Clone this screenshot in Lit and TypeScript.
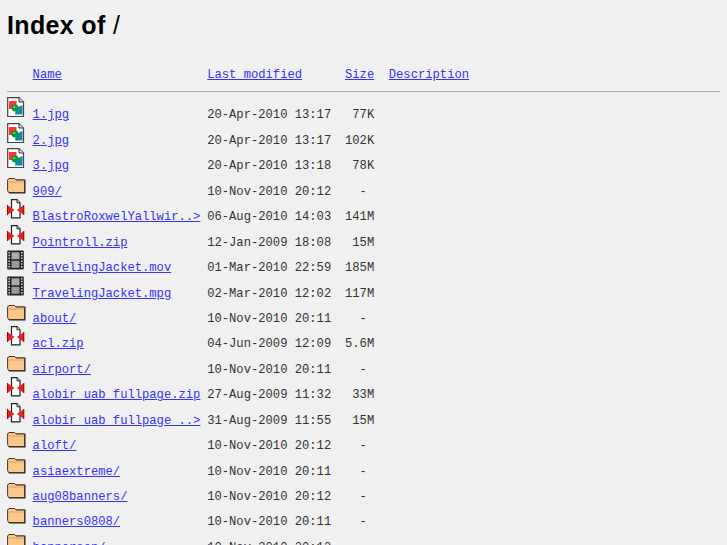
import { LitElement, html, css, svg } from "lit";
import { customElement } from "lit/decorators.js";

type Kind = "img" | "dir" | "zip" | "mov";
const rows: [Kind, string, string, string][] = [
  ["img", "1.jpg", "20-Apr-2010 13:17", "77K"],
  ["img", "2.jpg", "20-Apr-2010 13:17", "102K"],
  ["img", "3.jpg", "20-Apr-2010 13:18", "78K"],
  ["dir", "909/", "10-Nov-2010 20:12", "- "],
  ["zip", "BlastroRoxwelYallwir..>", "06-Aug-2010 14:03", "141M"],
  ["zip", "Pointroll.zip", "12-Jan-2009 18:08", "15M"],
  ["mov", "TravelingJacket.mov", "01-Mar-2010 22:59", "185M"],
  ["mov", "TravelingJacket.mpg", "02-Mar-2010 12:02", "117M"],
  ["dir", "about/", "10-Nov-2010 20:11", "- "],
  ["zip", "acl.zip", "04-Jun-2009 12:09", "5.6M"],
  ["dir", "airport/", "10-Nov-2010 20:11", "- "],
  ["zip", "alobir_uab_fullpage.zip", "27-Aug-2009 11:32", "33M"],
  ["zip", "alobir_uab_fullpage_..>", "31-Aug-2009 11:55", "15M"],
  ["dir", "aloft/", "10-Nov-2010 20:12", "- "],
  ["dir", "asiaextreme/", "10-Nov-2010 20:11", "- "],
  ["dir", "aug08banners/", "10-Nov-2010 20:12", "- "],
  ["dir", "banners0808/", "10-Nov-2010 20:11", "- "],
  ["dir", "bannerson/", "10-Nov-2010 20:12", "- "],
];

const icons: Record<Kind, unknown> = {
  img: svg`<path d="M.7 .7H12L16.5 5V19.5H.7Z" fill="#fff" stroke="#444" stroke-width="1.2"/><path d="M12 .7V5H16.5" fill="#ddd" stroke="#333"/><rect x="2" y="4" width="7.5" height="8" fill="#f33"/><path d="M9 11L15.5 8V17.5H8Z" fill="#18a"/><circle cx="8" cy="11" r="3.4" fill="#093"/><circle cx="7.2" cy="10" r="1.1" fill="#8d8"/>`,
  dir: svg`<path d="M2 5.5H18.5V19.5H2Z" fill="#222"/><path d="M.6 16.5V6L1.8 4.5H7.5L9 6H16.5L17.5 7V17.5L16.5 18.5H1.6Z" fill="#fbc88c" stroke="#4a3320" stroke-width="1"/><path d="M1.5 8H16.5" stroke="#d9a265" stroke-width="1"/>`,
  zip: svg`<path d="M4.5 .6H10L13 3.8V18.8H4.5Z" fill="#fff" stroke="#222" stroke-width="1.2"/><path d="M10 .6V3.8H13" fill="#eee" stroke="#222"/><path d="M.3 6L7.5 11L.3 16Z" fill="#e8202a"/><path d="M17 6L9.8 11L17 16Z" fill="#e8202a"/><path d="M.5 6V16M16.8 6V16" stroke="#a00" stroke-width="1"/>`,
  mov: svg`<rect x=".2" y=".6" width="16.6" height="19" rx="1" fill="#222"/><rect x="4.5" y="2.3" width="8" height="7" fill="#aaa"/><rect x="4.5" y="10.8" width="8" height="7" fill="#999"/><path d="M2.2 2V19M14.8 2V19" stroke="#ccc" stroke-width="1.6" stroke-dasharray="1.5 1.3"/>`,
};

@customElement("app-root")
export class AppRoot extends LitElement {
  static styles = css`
    :host { display: block; height: 545px; overflow: hidden; background: #f0f0f0; padding: 0 7px; box-sizing: border-box; color: #333; }
    h1 { font: bold 25px/28px "Liberation Sans", sans-serif; letter-spacing: .35px; color: #000; margin: 0; padding-top: 11px; height: 56px; }
    .slash { font-weight: normal; }
    .line { font: 12.17px/16px "Liberation Mono", monospace; white-space: pre; display: flex; align-items: flex-end; height: 25.44px; }
    .head { height: 16px; }
    .ic { width: 20px; height: 20px; flex: none; margin-right: 5.6px; margin-bottom: 6px; }
    .gutter { width: 25.6px; flex: none; }
    a { color: #33f; text-decoration: underline; }
    .name { width: 174.6px; flex: none; }
    .mod { width: 124px; flex: none; }
    .size { width: 43px; flex: none; text-align: right; }
    .desc { margin-left: 14.6px; }
    hr { height: 1px; border: 0; background: #aaa; margin: 8px 0 0; }
    .body { padding-top: 6px; }
  `;
  render() {
    return html`
      <h1>Index of <span class="slash">/</span></h1>
      <div class="line head">
        <span class="gutter"></span>
        <span class="name"><a href="#">Name</a></span>
        <span class="mod"><a href="#">Last modified</a></span>
        <span class="size"><a href="#">Size</a></span>
        <a class="desc" href="#">Description</a>
      </div>
      <hr />
      <div class="body">
        ${rows.map(([k, n, d, s]) => html`
          <div class="line">
            <svg class="ic" viewBox="0 0 20 20">${icons[k]}</svg>
            <span class="name"><a href="#">${n}</a></span>
            <span class="mod">${d}</span>
            <span class="size">${s}</span>
          </div>`)}
      </div>
    `;
  }
}
